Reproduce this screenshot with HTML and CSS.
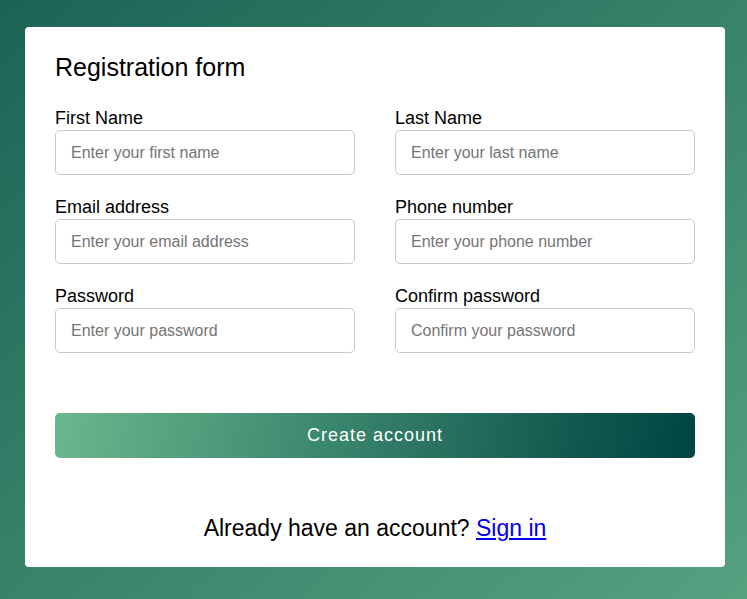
FILE: index.html
```html
<!DOCTYPE html>
<html lang="en">
<head>
<meta charset="utf-8">
<title>Registration form</title>
<link rel="stylesheet" href="styles.css">
</head>
<body>
<main class="page">
  <form class="card">
    <h1 class="title">Registration form</h1>
    <div class="fields">
      <div class="field">
        <label class="label" for="fn">First Name</label>
        <input class="input" id="fn" type="text" placeholder="Enter your first name">
      </div>
      <div class="field">
        <label class="label" for="ln">Last Name</label>
        <input class="input" id="ln" type="text" placeholder="Enter your last name">
      </div>
      <div class="field">
        <label class="label" for="em">Email address</label>
        <input class="input" id="em" type="email" placeholder="Enter your email address">
      </div>
      <div class="field">
        <label class="label" for="ph">Phone number</label>
        <input class="input" id="ph" type="tel" placeholder="Enter your phone number">
      </div>
      <div class="field">
        <label class="label" for="pw">Password</label>
        <input class="input" id="pw" type="password" placeholder="Enter your password">
      </div>
      <div class="field">
        <label class="label" for="cpw">Confirm password</label>
        <input class="input" id="cpw" type="password" placeholder="Confirm your password">
      </div>
    </div>
    <button class="submit" type="button">Create account</button>
    <p class="footer">Already have an account? <a href="#" class="link">Sign in</a></p>
  </form>
</main>
</body>
</html>
```
FILE: styles.css
```css
* { box-sizing: border-box; }
html, body { margin: 0; padding: 0; }
body {
  font-family: "Liberation Sans", Arial, sans-serif;
  background: linear-gradient(to bottom right, #1c6355, #56a180);
  min-height: 599px;
}
.page {
  padding: 27px 22px 32px 25px;
}
.card {
  width: 700px;
  height: 540px;
  background: #fff;
  border-radius: 4px;
  padding: 26px 30px 0 30px;
  display: flex;
  flex-direction: column;
}
.title {
  margin: 0 0 26px 0;
  font-size: 25px;
  font-weight: 400;
  line-height: 29px;
  color: #000;
}
.fields {
  display: grid;
  grid-template-columns: 300px 300px;
  column-gap: 40px;
  row-gap: 22px;
}
.field {
  display: flex;
  flex-direction: column;
}
.label {
  font-size: 18px;
  line-height: 20px;
  margin-bottom: 2px;
  color: #000;
}
.input {
  height: 45px;
  width: 300px;
  border: 1px solid #c8c8c8;
  border-radius: 5px;
  padding: 0 15px;
  font-family: "Liberation Sans", Arial, sans-serif;
  font-size: 16px;
  color: #000;
  outline: none;
}
.input::placeholder { color: #757575; }
.submit {
  margin-top: 60px;
  height: 45px;
  width: 640px;
  border: none;
  border-radius: 5px;
  background: linear-gradient(100deg, #6cb78d 0%, #3d8a70 40%, #14594f 80%, #004443 100%);
  color: #fff;
  font-family: "Liberation Sans", Arial, sans-serif;
  font-size: 18px;
  letter-spacing: 1px;
  cursor: pointer;
}
.footer {
  margin: 57px 0 0 0;
  text-align: center;
  font-size: 23px;
  line-height: 26px;
  color: #000;
}
.link { color: #0000ee; }
```
